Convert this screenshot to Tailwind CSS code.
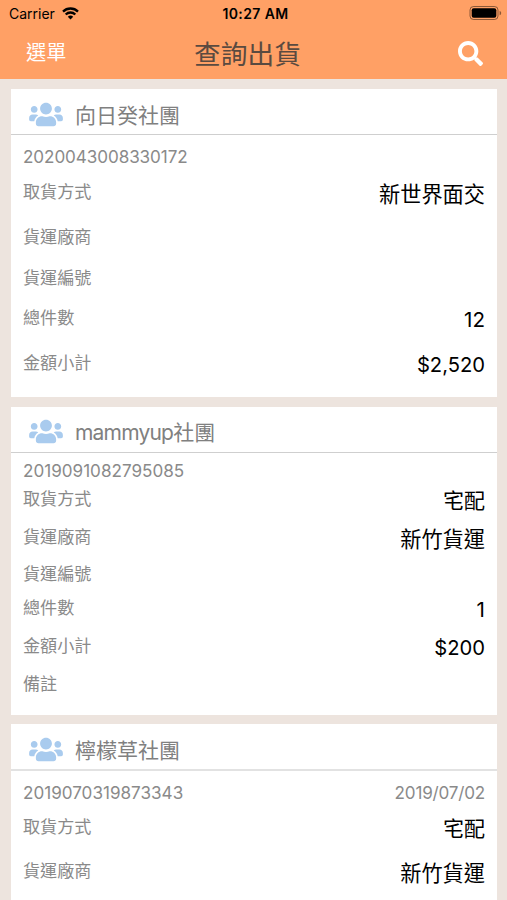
<!DOCTYPE html>
<html lang="zh-Hant">
<head>
    <meta charset="UTF-8">
    <meta name="viewport" content="width=device-width, initial-scale=1.0">
    <script src="https://cdn.jsdelivr.net/npm/@tailwindcss/browser@4"></script>
    <title>查詢出貨</title>
</head>
<body class="bg-[#ede4de] h-screen overflow-hidden font-[Inter,'Noto_Sans_CJK_TC',sans-serif]">
    <svg class="hidden">
        <symbol id="users" viewBox="0 0 640 512">
            <path d="M96 224c35.3 0 64-28.7 64-64s-28.7-64-64-64-64 28.7-64 64 28.7 64 64 64zm448 0c35.3 0 64-28.7 64-64s-28.7-64-64-64-64 28.7-64 64 28.7 64 64 64zm32 32h-64c-17.6 0-33.5 7.1-45.1 18.6 40.3 22.1 68.9 62 75.1 109.4h66c17.7 0 32-14.3 32-32v-32c0-35.3-28.7-64-64-64zm-256 0c61.9 0 112-50.1 112-112S381.9 32 320 32 208 82.1 208 144s50.1 112 112 112zm76.8 32h-8.3c-20.8 10-43.9 16-68.5 16s-47.6-6-68.5-16h-8.3C179.6 288 128 339.6 128 403.2V432c0 26.5 21.5 48 48 48h288c26.5 0 48-21.5 48-48v-28.8c0-63.6-51.6-115.2-115.2-115.2zm-223.7-13.4C161.5 263.1 145.6 256 128 256H64c-35.3 0-64 28.7-64 64v32c0 17.7 14.3 32 32 32h65.9c6.3-47.4 34.9-87.3 75.2-109.4z"/>
        </symbol>
    </svg>

    <header class="h-[79px] bg-[#ffa065]">
        <!-- status bar -->
        <div class="grid grid-cols-3 items-center h-[27px] pl-[9px] pr-[5px] text-black">
            <div class="flex items-center gap-[7px] text-[14px]">
                <span>Carrier</span>
                <svg class="w-[17px] h-[13px]" viewBox="0 0 17 13" fill="none" stroke="currentColor" stroke-width="2.3">
                    <path d="M1 4.6a10.6 10.6 0 0 1 15 0"/>
                    <path d="M3.7 7.5a6.8 6.8 0 0 1 9.6 0"/>
                    <path d="M8.5 12.6 5.8 9.8a3.9 3.9 0 0 1 5.4 0z" fill="currentColor" stroke="none"/>
                </svg>
            </div>
            <div class="text-center text-[14px] font-semibold tracking-[0.4px] whitespace-nowrap">10:27 AM</div>
            <svg class="justify-self-end w-[33px] h-[15px]" viewBox="0 0 33 15">
                <rect x="1" y=".5" width="28" height="13" rx="3.5" fill="none" stroke="#000" stroke-opacity=".45"/>
                <rect x="2.7" y="2.2" width="24.6" height="9.6" rx="2"/>
                <path d="M30.6 4.7v4.6c1-.4 1.6-1.3 1.6-2.3s-.6-1.9-1.6-2.3z" fill-opacity=".45"/>
            </svg>
        </div>
        <!-- nav -->
        <div class="grid grid-cols-3 items-center h-[52px] pl-[26px] pr-[24px]">
            <button class="justify-self-start text-[20.2px] text-white">選單</button>
            <h1 class="pt-[2px] pr-[14px] text-center text-[26.7px] leading-[50px] text-[#5a4a40] whitespace-nowrap">查詢出貨</h1>
            <svg class="justify-self-end size-[25px] fill-white" viewBox="0 0 512 512">
                <path d="M505 442.7L405.3 343c-4.5-4.5-10.6-7-17-7H372c27.6-35.3 44-79.7 44-128C416 93.1 322.9 0 208 0S0 93.1 0 208s93.1 208 208 208c48.3 0 92.7-16.4 128-44v16.3c0 6.4 2.5 12.5 7 17l99.7 99.7c9.4 9.4 24.6 9.4 33.9 0l28.3-28.3c9.4-9.4 9.4-24.6.1-34zM208 336c-70.7 0-128-57.2-128-128 0-70.7 57.2-128 128-128 70.7 0 128 57.2 128 128 0 70.7-57.2 128-128 128z"/>
            </svg>
        </div>
    </header>

    <main class="flex flex-col gap-[9.7px] h-[821px] overflow-hidden pt-[10px] pl-[10.5px] pr-[10px] text-[17.1px] leading-6 text-[#8a8a8a]">
        <section class="h-[308px] bg-white shrink-0">
            <h2 class="flex items-center gap-3 h-[46px] pl-[18px] pt-[5px] border-b border-[#cfcfcf] text-[21px] leading-10 text-[#808080]">
                <svg class="w-[34px] h-[27px] fill-[#a9cbee]"><use href="#users"/></svg>
                <span class="pt-[3px] pl-[0.5px]">向日癸社團</span>
            </h2>
            <div class="pt-[10px] pl-[12.5px] pr-3">
                <div class="h-[35px] tracking-[-0.08px]">2020043008330172</div>
                <div class="flex justify-between h-[45px]"><span>取貨方式</span><span class="pt-[2px] text-[21.2px] text-black">新世界面交</span></div>
                <div class="h-[41px]">貨運廠商</div>
                <div class="h-[40px]">貨運編號</div>
                <div class="flex justify-between h-[45px]"><span>總件數</span><span class="pt-[2px] text-[20.6px] text-black">12</span></div>
                <div class="flex justify-between"><span>金額小計</span><span class="pt-[2px] text-[20.2px] text-black">$2,520</span></div>
            </div>
        </section>

        <section class="h-[308px] bg-white shrink-0">
            <h2 class="flex items-center gap-3 h-[46px] pl-[18px] pt-[5px] border-b border-[#cfcfcf] text-[21px] leading-10 text-[#808080]">
                <svg class="w-[34px] h-[27px] fill-[#a9cbee]"><use href="#users"/></svg>
                <span class="pt-[3px] pl-[0.5px]"><span class="tracking-[-0.8px]">mammyup</span>社團</span>
            </h2>
            <div class="pt-[6.5px] pl-[12.5px] pr-3">
                <div class="h-[28px]">2019091082795085</div>
                <div class="flex justify-between h-[38px]"><span>取貨方式</span><span class="pt-[2px] text-[21px] text-black">宅配</span></div>
                <div class="flex justify-between h-[37px]"><span>貨運廠商</span><span class="pt-[2px] text-[21.2px] text-black">新竹貨運</span></div>
                <div class="h-[34px]">貨運編號</div>
                <div class="flex justify-between h-[38px]"><span>總件數</span><span class="pt-[2px] text-[20.6px] text-black">1</span></div>
                <div class="flex justify-between h-[38px]"><span>金額小計</span><span class="pt-[2px] text-[20.2px] text-black">$200</span></div>
                <div>備註</div>
            </div>
        </section>

        <section class="h-[308px] bg-white shrink-0">
            <h2 class="flex items-center gap-3 h-[46.6px] pl-[18px] pt-[5px] border-b-2 border-[#e2e2e2] text-[21px] leading-10 text-[#808080]">
                <svg class="w-[34px] h-[27px] fill-[#a9cbee]"><use href="#users"/></svg>
                <span class="pt-[3px] pl-[0.5px]">檸檬草社團</span>
            </h2>
            <div class="pt-[10px] pl-[12.5px] pr-3">
                <div class="flex justify-between h-[34px]"><span>2019070319873343</span><span class="tracking-[-0.2px]">2019/07/02</span></div>
                <div class="flex justify-between h-[44.5px]"><span>取貨方式</span><span class="pt-[2px] text-[21px] text-black">宅配</span></div>
                <div class="flex justify-between"><span>貨運廠商</span><span class="pt-[2px] text-[21.2px] text-black">新竹貨運</span></div>
            </div>
        </section>
    </main>
</body>
</html>
